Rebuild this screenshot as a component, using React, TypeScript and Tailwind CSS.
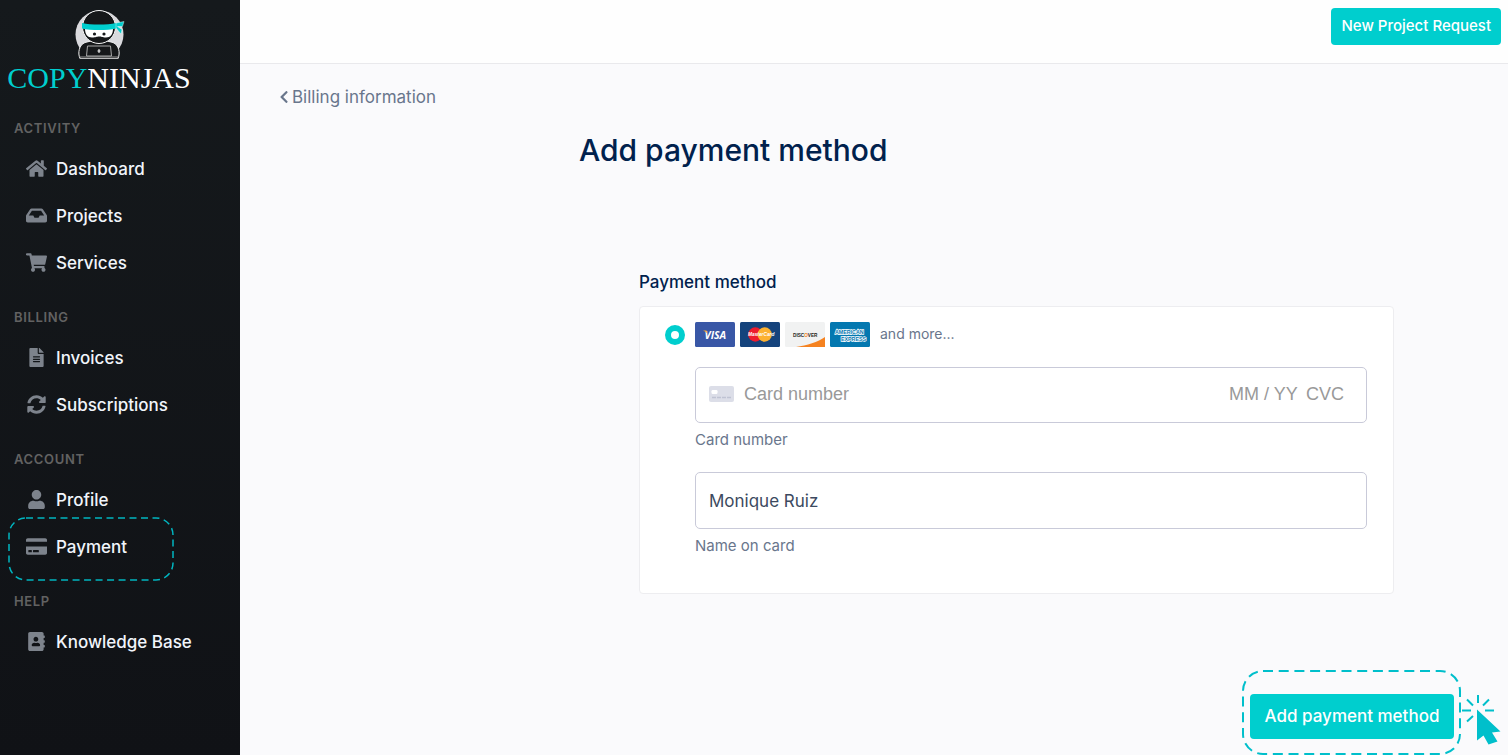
import type { ReactNode } from "react"
import {
  FaAddressBook,
  FaChevronLeft,
  FaCreditCard,
  FaFileAlt,
  FaHome,
  FaInbox,
  FaShoppingCart,
  FaSyncAlt,
  FaUser,
} from "react-icons/fa"

type NavItem = { label: string; icon: ReactNode; marked?: boolean }
type NavSection = { title: string; items: NavItem[] }

const sections: NavSection[] = [
  {
    title: "ACTIVITY",
    items: [
      { label: "Dashboard", icon: <FaHome /> },
      { label: "Projects", icon: <FaInbox /> },
      { label: "Services", icon: <FaShoppingCart /> },
    ],
  },
  {
    title: "BILLING",
    items: [
      { label: "Invoices", icon: <FaFileAlt /> },
      { label: "Subscriptions", icon: <FaSyncAlt /> },
    ],
  },
  {
    title: "ACCOUNT",
    items: [
      { label: "Profile", icon: <FaUser /> },
      { label: "Payment", icon: <FaCreditCard />, marked: true },
    ],
  },
  {
    title: "HELP",
    items: [{ label: "Knowledge Base", icon: <FaAddressBook /> }],
  },
]

function Ninja() {
  return (
    <svg viewBox="0 0 52 52" className="w-[52px] h-[52px]" aria-hidden="true">
      <circle cx="26.500" cy="26.500" r="24" fill="#dadade" />
      <path
        d="M7 50.500C4.500 45 6 37 12 34.500L18 33H34L40 34.500C46 37 47.500 45 45 50.500Z"
        fill="#16181a"
        stroke="#f2f2f2"
        strokeWidth="1"
      />
      <ellipse cx="26" cy="19" rx="16.500" ry="16.500" fill="#16181a" stroke="#f2f2f2" strokeWidth="1" />
      <path d="M12 21H40C40 26 37.500 29.500 33 29.500C29 29.500 28.500 28.500 26 28.500C23.500 28.500 23 29.500 19 29.500C14.500 29.500 12 26 12 21Z" fill="#fff" />
      <circle cx="21.500" cy="26" r="1.600" fill="#16181a" />
      <circle cx="31" cy="26" r="1.600" fill="#16181a" />
      <path d="M9 15C18 17 34 17 43 15V20.500C34 22.500 18 22.500 9 20.500Z" fill="#00cece" />
      <path d="M43 15L51 13.500L49.500 18.500L44.500 18.500L49 21.500L48 26L43 20Z" fill="#00cece" stroke="#fff" strokeWidth=".4" />
      <path d="M14.500 38H37.500L38.500 48H13.500Z" fill="#16181a" stroke="#a9a9a9" strokeWidth="1" />
      <path d="M7 49H45V50.500H7Z" fill="#16181a" stroke="#cfcfcf" strokeWidth=".7" />
      <path d="M26 41V45M24.500 43H27.500" stroke="#fff" strokeWidth="1" />
    </svg>
  )
}

function Logo() {
  return (
    <div className="flex flex-col items-center w-[198px] h-[98px] pt-2">
      <Ninja />
      <span className="font-['Liberation_Serif',serif] text-[30px] leading-9 text-white">
        <span className="text-[#00cece]">COPY</span>NINJAS
      </span>
    </div>
  )
}

function Sidebar() {
  return (
    <aside className="w-60 shrink-0 bg-linear-to-b from-[#15191c] to-[#101216]">
      <Logo />
      <nav>
        {sections.map((section) => (
          <section key={section.title}>
            <h2 className="pt-5 pb-2 px-[14px] text-[13px] leading-5 font-semibold tracking-wider text-[#626262]">
              {section.title}
            </h2>
            {section.items.map((item) => (
              <a key={item.label} href="#" className="relative flex items-center h-[47px] pl-[26px] text-[17px] font-medium text-[#f1f5fb]">
                <span className="w-[21px] mr-[9px] pb-[2px] text-[#7d838c] [&>svg]:h-[19px] [&>svg]:w-[21px]">
                  {item.icon}
                </span>
                {item.label}
                {item.marked && (
                  <svg className="absolute left-2 -top-[7px] w-[166px] h-[65px]" fill="none" aria-hidden="true">
                    <rect x="1" y="1" width="164" height="62" rx="17" stroke="#00b5c0" strokeWidth="1.500" strokeDasharray="7 4.500" />
                  </svg>
                )}
              </a>
            ))}
          </section>
        ))}
      </nav>
    </aside>
  )
}

function Visa() {
  return (
    <svg viewBox="0 0 40 25" className="w-10 h-[25px]" role="img" aria-label="Visa">
      <rect width="40" height="25" rx="1.500" fill="#3957a6" />
      <text x="9.500" y="16.500" fontFamily="Open Sans, sans-serif" fontSize="10.500" fontWeight="700" fontStyle="italic" fill="#fff">VISA</text>
      <path d="M8.500 8.500H11.500L12.500 12C11.500 10 10 9.300 8.500 8.900Z" fill="#f8a532" />
    </svg>
  )
}

function Mastercard() {
  return (
    <svg viewBox="0 0 40 25" className="w-10 h-[25px]" role="img" aria-label="Mastercard">
      <rect width="40" height="25" rx="1.500" fill="#15437c" />
      <circle cx="15.300" cy="12.500" r="7.200" fill="#ed1c2e" />
      <circle cx="24.700" cy="12.500" r="7.200" fill="#fcb131" />
      <text x="8" y="14" fontFamily="Liberation Sans, sans-serif" fontSize="4.800" fontWeight="700" fontStyle="italic" fill="#fff">MasterCard</text>
    </svg>
  )
}

function Discover() {
  return (
    <svg viewBox="0 0 40 25" className="w-10 h-[25px]" role="img" aria-label="Discover">
      <rect width="40" height="25" rx="1.500" fill="#f1f2f2" />
      <path d="M11 25C22 23.500 33 20 40 15V25Z" fill="#f58220" />
      <text x="8" y="14.500" fontFamily="Liberation Sans, sans-serif" fontSize="4.700" fontWeight="700" fill="#231f20">
        DISC<tspan fill="#f58220">O</tspan>VER
      </text>
    </svg>
  )
}

function Amex() {
  return (
    <svg viewBox="0 0 40 25" className="w-10 h-[25px]" role="img" aria-label="American Express">
      <rect width="40" height="25" rx="1.500" fill="#0478b0" />
      <g fontFamily="Liberation Sans, sans-serif" fontSize="5.300" fontWeight="700" fill="#0478b0" stroke="#fff" strokeWidth="1.400" paintOrder="stroke">
        <text x="5" y="11.500">AMERICAN</text>
        <text x="11" y="18.500">EXPRESS</text>
      </g>
    </svg>
  )
}

function CardGlyph() {
  return (
    <svg viewBox="0 0 25 16" className="w-[25px] h-4 shrink-0" aria-hidden="true">
      <rect width="25" height="16" rx="2" fill="#dcdee8" />
      <rect x="2.500" y="4" width="6" height="4" rx="1.200" fill="#fff" />
      <path d="M3 11.500H22" stroke="#bfc3d3" strokeWidth="1.600" strokeDasharray="4 1" />
    </svg>
  )
}

function Pointer() {
  return (
    <svg viewBox="0 0 40 52" className="absolute left-[212px] top-0 w-10 h-[52px]" aria-hidden="true">
      <g stroke="#00bfcb" strokeWidth="2" fill="none">
        <path d="M16 1V9M5 5.500L11 11.500M27 5.500L21 11.500M0 16.500H9M23 16.500H32M5 27.500L11 22" />
      </g>
      <path d="M15 15.500L38.500 37.500L30 38.500L35.500 47.500L26.500 50.500L21.500 41.500L15 46.500Z" fill="#00bfcb" />
    </svg>
  )
}

function PaymentForm() {
  return (
    <form className="px-[60px]" onSubmit={(e) => e.preventDefault()}>
      <h2 className="text-[17px] leading-6 font-medium text-[#00214d]">Payment method</h2>
      <div className="mt-3 h-72 pl-[25px] pr-[26px] pt-[15px] bg-white border border-[#ededf0] rounded">
        <div className="flex items-center gap-[5px]">
          <input
            id="card"
            type="radio"
            name="method"
            defaultChecked
            className="appearance-none w-5 h-5 mr-[5px] rounded-full bg-white border-[6px] border-[#00cece]"
          />
          <Visa />
          <Mastercard />
          <Discover />
          <Amex />
          <label htmlFor="card" className="ml-[5px] pb-[2px] text-sm text-[#69768c]">and more...</label>
        </div>
        <div className="pl-[30px] pt-5 text-[15px] leading-5 text-[#69768c]">
          <div className="flex items-center h-14 px-[13px] pb-[2px] border border-[#c9cad9] rounded-[5px] font-['Liberation_Sans',Arial,sans-serif] text-lg">
            <CardGlyph />
            <input id="number" placeholder="Card number" className="flex-1 min-w-0 ml-[10px] outline-none placeholder:text-[#999]" />
            <input aria-label="Expiry date" placeholder="MM / YY" className="w-[77px] outline-none placeholder:text-[#999]" />
            <input aria-label="CVC" placeholder="CVC" className="w-[47px] outline-none placeholder:text-[#999]" />
          </div>
          <label htmlFor="number" className="block mt-[7px]">Card number</label>
          <input
            id="name"
            defaultValue="Monique Ruiz"
            className="w-full h-[57px] mt-[22px] px-[13px] border border-[#c9cad9] rounded-[5px] text-[17px] text-[#3c4a60] outline-none"
          />
          <label htmlFor="name" className="block mt-[7px]">Name on card</label>
        </div>
      </div>
      <div className="flex justify-end -mr-[60px] mt-[100px] pb-4">
        <div className="relative">
          <button className="block w-[204px] h-[45px] rounded bg-[#00cece] text-[17px] font-medium text-white">Add payment method</button>
          <svg className="absolute -left-[9px] -top-[25px] w-[222px] h-[86px]" fill="none" aria-hidden="true">
            <rect x="2" y="2" width="217" height="83" rx="20" stroke="#00bfcb" strokeWidth="2" strokeDasharray="10 5.700" />
          </svg>
          <Pointer />
        </div>
      </div>
    </form>
  )
}

export default function App() {
  return (
    <div className="flex min-h-screen bg-[#fafafc] font-['Inter',sans-serif]">
      <Sidebar />
      <div className="flex-1 min-w-0">
        <header className="flex justify-end items-start h-16 pt-2 pr-[7px] bg-[#fefefe] border-b border-[#e9e9ec]">
          <button className="h-[37px] px-[10px] rounded bg-[#00cece] text-[15px] font-medium text-white">New Project Request</button>
        </header>
        <main className="pl-[39px] pr-[54px] pt-[21px]">
          <a href="#" className="flex items-center gap-[3px] w-fit text-[17px] leading-6 text-[#69768c]">
            <FaChevronLeft className="w-[10px] h-[14px]" />
            Billing information
          </a>
          <div className="pl-[300px] pt-[21px]">
            <h1 className="text-[30px] leading-10 font-medium text-[#00214d]">Add payment method</h1>
            <div className="pt-[100px]">
              <PaymentForm />
            </div>
          </div>
        </main>
      </div>
    </div>
  )
}
